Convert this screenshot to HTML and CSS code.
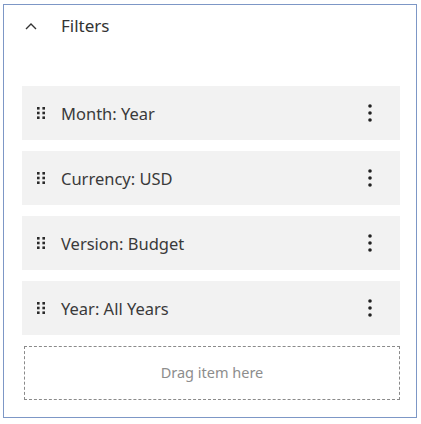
FILE: index.html
```html
<!DOCTYPE html>
<html>
<head>
<meta charset="utf-8">
<link rel="stylesheet" href="styles.css">
</head>
<body>
<div class="panel">
  <div class="header">
    <svg class="chevron" width="12" height="8" viewBox="0 0 12 8"><path d="M1 7 L6 2 L11 7" fill="none" stroke="#333" stroke-width="1.4"/></svg>
    <span class="title">Filters</span>
  </div>
  <div class="list">
    <div class="item">
      <svg class="handle" width="8" height="12" viewBox="0 0 8 12"><g fill="#2a2a2a"><rect x="0" y="0" width="2.6" height="2.6"/><rect x="5.4" y="0" width="2.6" height="2.6"/><rect x="0" y="4.7" width="2.6" height="2.6"/><rect x="5.4" y="4.7" width="2.6" height="2.6"/><rect x="0" y="9.4" width="2.6" height="2.6"/><rect x="5.4" y="9.4" width="2.6" height="2.6"/></g></svg>
      <span class="label">Month: Year</span>
      <svg class="kebab" width="4" height="18" viewBox="0 0 4 18"><g fill="#222"><circle cx="2" cy="2" r="1.8"/><circle cx="2" cy="9" r="1.8"/><circle cx="2" cy="16" r="1.8"/></g></svg>
    </div>
    <div class="item">
      <svg class="handle" width="8" height="12" viewBox="0 0 8 12"><g fill="#2a2a2a"><rect x="0" y="0" width="2.6" height="2.6"/><rect x="5.4" y="0" width="2.6" height="2.6"/><rect x="0" y="4.7" width="2.6" height="2.6"/><rect x="5.4" y="4.7" width="2.6" height="2.6"/><rect x="0" y="9.4" width="2.6" height="2.6"/><rect x="5.4" y="9.4" width="2.6" height="2.6"/></g></svg>
      <span class="label">Currency: USD</span>
      <svg class="kebab" width="4" height="18" viewBox="0 0 4 18"><g fill="#222"><circle cx="2" cy="2" r="1.8"/><circle cx="2" cy="9" r="1.8"/><circle cx="2" cy="16" r="1.8"/></g></svg>
    </div>
    <div class="item">
      <svg class="handle" width="8" height="12" viewBox="0 0 8 12"><g fill="#2a2a2a"><rect x="0" y="0" width="2.6" height="2.6"/><rect x="5.4" y="0" width="2.6" height="2.6"/><rect x="0" y="4.7" width="2.6" height="2.6"/><rect x="5.4" y="4.7" width="2.6" height="2.6"/><rect x="0" y="9.4" width="2.6" height="2.6"/><rect x="5.4" y="9.4" width="2.6" height="2.6"/></g></svg>
      <span class="label">Version: Budget</span>
      <svg class="kebab" width="4" height="18" viewBox="0 0 4 18"><g fill="#222"><circle cx="2" cy="2" r="1.8"/><circle cx="2" cy="9" r="1.8"/><circle cx="2" cy="16" r="1.8"/></g></svg>
    </div>
    <div class="item">
      <svg class="handle" width="8" height="12" viewBox="0 0 8 12"><g fill="#2a2a2a"><rect x="0" y="0" width="2.6" height="2.6"/><rect x="5.4" y="0" width="2.6" height="2.6"/><rect x="0" y="4.7" width="2.6" height="2.6"/><rect x="5.4" y="4.7" width="2.6" height="2.6"/><rect x="0" y="9.4" width="2.6" height="2.6"/><rect x="5.4" y="9.4" width="2.6" height="2.6"/></g></svg>
      <span class="label">Year: All Years</span>
      <svg class="kebab" width="4" height="18" viewBox="0 0 4 18"><g fill="#222"><circle cx="2" cy="2" r="1.8"/><circle cx="2" cy="9" r="1.8"/><circle cx="2" cy="16" r="1.8"/></g></svg>
    </div>
    <div class="drop"><span class="drop-text">Drag item here</span></div>
  </div>
</div>
</body>
</html>
```
FILE: styles.css
```css
html, body {
  margin: 0;
  padding: 0;
  background: #fff;
}
body {
  font-family: "Noto Sans", "Open Sans", sans-serif;
  color: #393939;
}
.panel {
  box-sizing: border-box;
  width: 414px;
  height: 414px;
  margin: 4px 0 0 3px;
  border: 1px solid #7d97c6;
  padding: 0 16px 0 18px;
}
.header {
  height: 41px;
  display: flex;
  align-items: center;
}
.chevron {
  margin-left: 3px;
}
.title {
  margin-left: 24px;
  font-size: 17px;
  color: #333;
}
.list {
  margin-top: 40px;
  display: flex;
  flex-direction: column;
  gap: 11px;
}
.item {
  height: 54px;
  background: #f2f2f2;
  display: flex;
  align-items: center;
  padding: 0 28px 0 15px;
}
.handle {
  flex: none;
}
.label {
  margin-left: 16px;
  font-size: 16.5px;
  flex: 1;
  color: #3a3a3a;
}
.kebab {
  flex: none;
}
.drop {
  box-sizing: border-box;
  height: 54px;
  margin-left: 2px;
  border: 1px dashed #8a8a8a;
  display: flex;
  align-items: center;
  justify-content: center;
  font-size: 14.5px;
  color: #8d8d8d;
}
.drop-text {
  margin-top: -3px;
}
```
